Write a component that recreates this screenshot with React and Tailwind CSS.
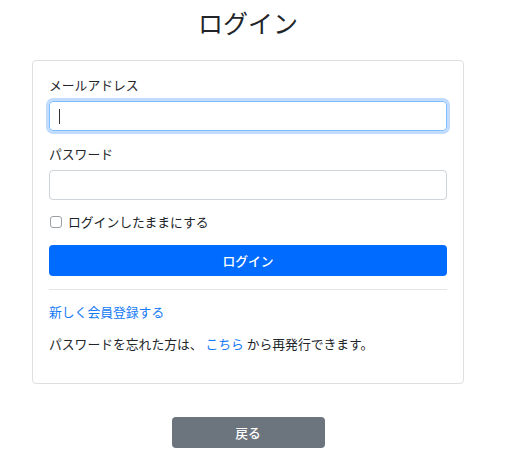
export default function App() {
  return (
    <main className="w-[496px] min-h-[469px] bg-white flex flex-col items-center text-[#212529] font-['Noto_Sans_CJK_JP','Noto_Sans',sans-serif]">
      <h1 className="pt-[7px] text-[25px] leading-[30px] font-normal">ログイン</h1>

      <div className="mt-[23px] w-[432px] border border-[#dfdfdf] rounded-[4px] px-4 pt-[15px] pb-[30px]">
        <label className="block text-[12.8px] leading-[18px]">メールアドレス</label>
        <div className="mt-[7px] h-[30px] rounded-[4px] border border-[#80bdff] ring-[3px] ring-[#c2dcfd] flex items-center px-[9px]">
          <span className="w-px h-[15px] bg-[#333]"></span>
        </div>

        <label className="block mt-[14px] text-[12.8px] leading-[18px]">パスワード</label>
        <div className="mt-[7px] h-[30px] rounded-[4px] border border-[#ced4da]"></div>

        <div className="mt-[13px] h-[18px] flex items-center gap-[6px]">
          <span className="ml-px w-[12px] h-[12px] rounded-[3px] border border-[#9aa0a6]"></span>
          <span className="text-[12.8px] leading-[18px]">ログインしたままにする</span>
        </div>

        <button className="mt-[14px] w-full h-[31px] rounded-[4px] bg-[#006cff] text-white text-[12.8px] font-medium flex items-center justify-center">
          ログイン
        </button>

        <hr className="mt-[13px] border-0 h-px bg-[#e5e5e5]" />

        <p className="mt-[13px] text-[12.8px] leading-[18px] text-[#1479f5]">新しく会員登録する</p>

        <p className="mt-[14px] text-[12.8px] leading-[18px]">
          パスワードを忘れた方は、 <span className="text-[#1479f5]">こちら</span> から再発行できます。
        </p>
      </div>

      <button className="mt-[33px] w-[153px] h-[31px] rounded-[4px] bg-[#6c757d] text-white text-[12.8px] font-medium flex items-center justify-center">
        戻る
      </button>
    </main>
  );
}
